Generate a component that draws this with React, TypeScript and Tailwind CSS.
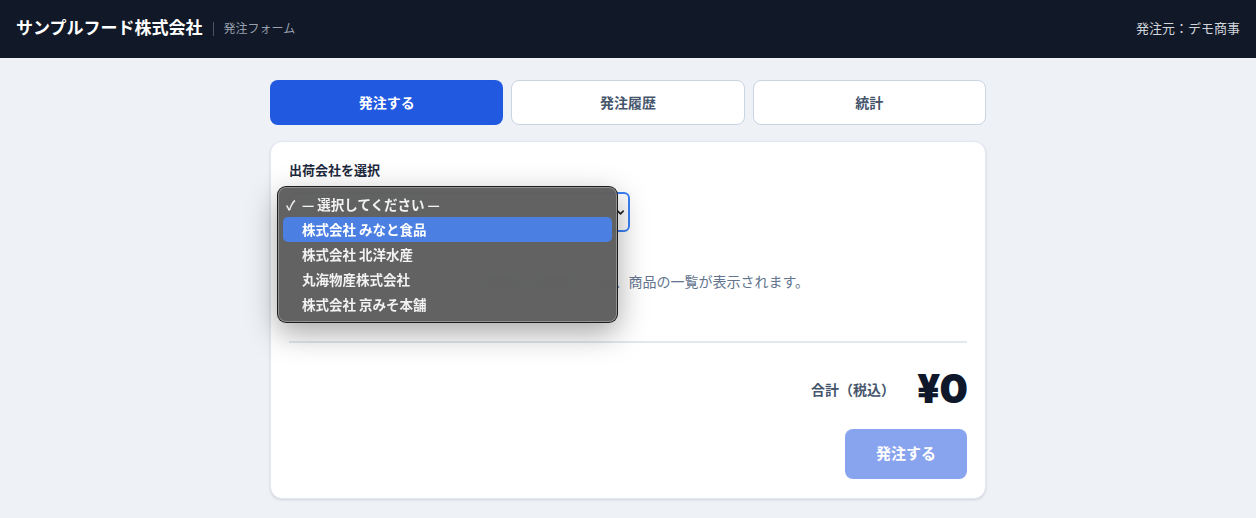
import React from "react";

const FONT = { fontFamily: 'Inter, "Noto Sans CJK JP", "Noto Sans", sans-serif' };
const CJK = { fontFamily: '"Noto Sans CJK JP", "Noto Sans", sans-serif' };

export default function App() {
  const items = ["株式会社 みなと食品", "株式会社 北洋水産", "丸海物産株式会社", "株式会社 京みそ本舗"];
  return (
    <div style={FONT} className="min-h-[518px] bg-[#eef2f7] text-slate-800">
      <header className="flex h-[58px] items-center justify-between bg-[#111827] px-4">
        <div className="flex items-center">
          <span className="text-[17px] font-bold text-white">サンプルフード株式会社</span>
          <span className="mx-[10px] h-[14px] w-px bg-gray-600" />
          <span className="text-[12px] text-gray-400">発注フォーム</span>
        </div>
        <span className="text-[13px] text-gray-300">発注元：デモ商事</span>
      </header>

      <main className="mx-auto w-[716px] pt-[22px]">
        <div className="grid grid-cols-3 gap-2">
          <button className="h-[45px] rounded-lg bg-[#2159e0] text-[14px] font-bold text-white">発注する</button>
          <button className="h-[45px] rounded-lg border border-slate-300 bg-white text-[14px] font-bold text-slate-600">発注履歴</button>
          <button className="h-[45px] rounded-lg border border-slate-300 bg-white text-[14px] font-bold text-slate-600">統計</button>
        </div>

        <section className="mt-[16px] rounded-xl border border-slate-200 bg-white px-[18px] pb-[19px] pt-[18px] shadow-sm">
          <div className="text-[13px] font-bold leading-5 text-slate-800">出荷会社を選択</div>

          <div className="relative mt-[12px] w-[341px]">
            <div className="flex h-[40px] items-center justify-between rounded-md border-2 border-[#3b82f6] bg-white pl-3 pr-[3px] text-[14px] text-slate-700">
              <span style={CJK}>— 選択してください —</span>
              <svg width="9" height="9" viewBox="0 0 10 10" fill="none" stroke="#222" strokeWidth="1.8" strokeLinecap="round" strokeLinejoin="round">
                <path d="M2 3.5 L5 6.5 L8 3.5" />
              </svg>
            </div>

            <div
              style={CJK}
              className="absolute left-[-12px] top-[-6px] z-10 w-[341px] rounded-[9px] border border-black/70 bg-[#5a5a5a]/95 px-[5px] py-[5px] shadow-[0_10px_30px_rgba(0,0,0,0.35)] ring-1 ring-inset ring-white/30 backdrop-blur-md"
            >
              <div className="flex h-[25px] items-center text-[13.5px] font-semibold text-[#f2f2f2]">
                <span className="w-[19px] pl-[3px] text-[13px] font-bold">✓</span>
                <span>— 選択してください —</span>
              </div>
              <div className="flex h-[25px] items-center rounded-[5px] bg-[#4b80e2] text-[13.5px] font-semibold text-white">
                <span className="w-[19px]" />
                <span>{items[0]}</span>
              </div>
              {items.slice(1).map((t) => (
                <div key={t} className="flex h-[25px] items-center text-[13.5px] font-semibold text-[#f2f2f2]">
                  <span className="w-[19px]" />
                  <span>{t}</span>
                </div>
              ))}
            </div>
          </div>

          <div className="pb-[49px] pt-[40px] text-center text-[14px] leading-5 text-slate-500">
            上で出荷会社を選択すると、商品の一覧が表示されます。
          </div>

          <div className="h-[2px] bg-slate-200" />

          <div className="mt-[26px] flex items-center justify-end gap-[22px]">
            <span className="text-[14px] font-bold text-slate-600">合計（税込）</span>
            <span className="text-[40px] font-black leading-none tracking-tight text-slate-900">¥0</span>
          </div>

          <div className="mt-[20px] flex justify-end">
            <button className="h-[50px] w-[122px] rounded-lg bg-[#88a4ee] text-[15px] font-bold text-white">発注する</button>
          </div>
        </section>
      </main>
    </div>
  );
}
